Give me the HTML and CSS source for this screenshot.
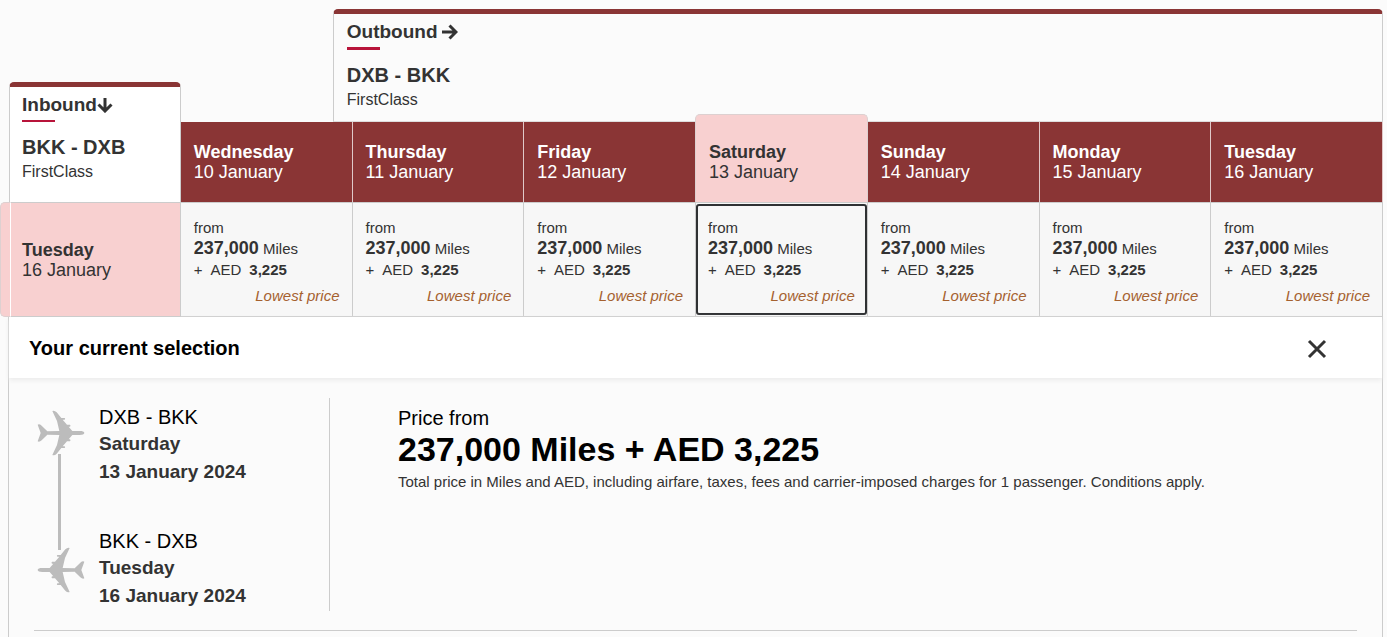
FILE: index.html
```html
<!DOCTYPE html>
<html lang="en">
<head>
<meta charset="utf-8">
<meta name="viewport" content="width=device-width, initial-scale=1">
<title>Flight fares</title>
<link rel="stylesheet" href="styles.css">
</head>
<body>
<svg class="defs" aria-hidden="true">
  <symbol id="plane" viewBox="0 0 150 144">
    <path d="M145 72c0 4-6 6-14 6H109L98 91h4q3 3 0 6H93L80 112h6q3 3 0 5H76L62 134q-7 7-13 4L63 108 70 78 34 77 17 94q-7 6-12 3L14 72 5 47q5-3 12 3L34 67 70 66 63 36 49 6q6-3 13 4L76 27H86q3 2 0 5H80L93 47h9q3 3 0 6H98L109 66h22c8 0 14 2 14 6z"/>
  </symbol>
</svg>
<main class="page">
  <table class="fares">
    <thead>
      <tr class="directions">
        <th class="corner" rowspan="2" scope="col">
          <div class="leg inbound">
            <div class="leg-title">Inbound<svg class="arrow" viewBox="0 0 16 16"><path d="M8 1v13M1.500 7.500L8 14l6.500-6.500"/></svg></div>
            <div class="leg-route">BKK - DXB</div>
            <div class="leg-class">FirstClass</div>
          </div>
        </th>
        <th class="top" colspan="7" scope="colgroup">
          <div class="leg outbound">
            <div class="leg-title">Outbound<svg class="arrow spaced" viewBox="0 0 16 16"><path d="M0 8h14M7.500 1.500L14 8l-6.500 6.500"/></svg></div>
            <div class="leg-route">DXB - BKK</div>
            <div class="leg-class">FirstClass</div>
          </div>
        </th>
      </tr>
      <tr class="days">
        <th scope="col"><div class="day"><b>Wednesday</b><span>10 January</span></div></th>
        <th scope="col"><div class="day"><b>Thursday</b><span>11 January</span></div></th>
        <th scope="col"><div class="day"><b>Friday</b><span>12 January</span></div></th>
        <th scope="col" class="chosen"><div class="day"><b>Saturday</b><span>13 January</span></div></th>
        <th scope="col"><div class="day"><b>Sunday</b><span>14 January</span></div></th>
        <th scope="col"><div class="day"><b>Monday</b><span>15 January</span></div></th>
        <th scope="col"><div class="day"><b>Tuesday</b><span>16 January</span></div></th>
      </tr>
    </thead>
    <tbody>
      <tr class="prices">
        <th scope="row"><div class="day"><b>Tuesday</b><span>16 January</span></div></th>
        <td><button class="fare" type="button"><span>from</span><span><b class="miles">237,000</b> Miles</span><span class="cash"><i>+</i><i>AED</i><b>3,225</b></span><em>Lowest price</em></button></td>
        <td><button class="fare" type="button"><span>from</span><span><b class="miles">237,000</b> Miles</span><span class="cash"><i>+</i><i>AED</i><b>3,225</b></span><em>Lowest price</em></button></td>
        <td><button class="fare" type="button"><span>from</span><span><b class="miles">237,000</b> Miles</span><span class="cash"><i>+</i><i>AED</i><b>3,225</b></span><em>Lowest price</em></button></td>
        <td><button class="fare selected" type="button" aria-pressed="true"><span>from</span><span><b class="miles">237,000</b> Miles</span><span class="cash"><i>+</i><i>AED</i><b>3,225</b></span><em>Lowest price</em></button></td>
        <td><button class="fare" type="button"><span>from</span><span><b class="miles">237,000</b> Miles</span><span class="cash"><i>+</i><i>AED</i><b>3,225</b></span><em>Lowest price</em></button></td>
        <td><button class="fare" type="button"><span>from</span><span><b class="miles">237,000</b> Miles</span><span class="cash"><i>+</i><i>AED</i><b>3,225</b></span><em>Lowest price</em></button></td>
        <td><button class="fare" type="button"><span>from</span><span><b class="miles">237,000</b> Miles</span><span class="cash"><i>+</i><i>AED</i><b>3,225</b></span><em>Lowest price</em></button></td>
      </tr>
    </tbody>
  </table>

  <section class="selection">
    <header class="selection-head">
      <h2>Your current selection</h2>
      <button class="close" type="button" aria-label="Close"><svg viewBox="0 0 24 24"><path d="M4 5l16 16M20 5L4 21"/></svg></button>
    </header>
    <div class="details">
      <div class="itinerary">
        <div class="track" aria-hidden="true">
          <svg class="plane"><use href="#plane"/></svg>
          <div class="line"></div>
          <svg class="plane back"><use href="#plane"/></svg>
        </div>
        <div class="stops">
          <div class="stop"><span>DXB - BKK</span><b>Saturday</b><b>13 January 2024</b></div>
          <div class="stop"><span>BKK - DXB</span><b>Tuesday</b><b>16 January 2024</b></div>
        </div>
      </div>
      <div class="total">
        <div class="total-label">Price from</div>
        <div class="total-price">237,000 Miles + AED 3,225</div>
        <p>Total price in Miles and AED, including airfare, taxes, fees and carrier-imposed charges for 1 passenger. Conditions apply.</p>
      </div>
    </div>
    <hr>
  </section>
</main>
</body>
</html>
```

FILE: styles.css
```css
* { box-sizing: border-box; }

body {
  margin: 0;
  background: #fbfbfb;
  color: #333;
  font: 15px/20px "Liberation Sans", Arial, sans-serif;
}

.defs { display: none; }

.page {
  display: flex;
  flex-direction: column;
  min-height: 100vh;
  padding: 9px 4px 0 8px;
}

/* Fare calendar */
.fares {
  width: calc(100% - 1px);
  margin-left: 1px;
  table-layout: fixed;
  border-spacing: 0;
}

.fares th,
.fares td {
  padding: 0;
  text-align: left;
  font-weight: normal;
}

.corner { vertical-align: bottom; }
.top { vertical-align: top; }

.leg {
  padding: 7px 12px 0;
  border: 1px solid #ccc;
  border-top: 5px solid #8a3535;
  border-bottom: 0;
  border-radius: 5px 5px 0 0;
}

.inbound {
  height: 120px;
  background: #fff;
}

.outbound {
  height: 113px;
  margin-left: 152px;
  padding-left: 13px;
  border-bottom: 1px solid #ddd;
}

.leg-title {
  display: flex;
  align-items: center;
  font-size: 19px;
  line-height: 22px;
  font-weight: bold;
}

.leg-route {
  margin-top: 4px;
  font-size: 20px;
  line-height: 24px;
  font-weight: bold;
}

.leg-route::before {
  content: "";
  display: block;
  width: 33px;
  height: 2px;
  margin-bottom: 13px;
  background: #b8143a;
}

.outbound .leg-route::before { height: 3px; }

.leg-class {
  margin-top: 3px;
  font-size: 16px;
}

.arrow {
  width: 16px;
  height: 16px;
  fill: none;
  stroke: #333;
  stroke-width: 3;
}

.arrow.spaced { margin-left: 4px; }

.day b,
.day span {
  display: block;
  font-size: 18px;
}

.days th {
  height: 80px;
  border-right: 1px solid #e0c8c8;
  background: #8a3535;
  color: #fff;
}

.day { padding-left: 13px; }

.days .chosen {
  position: relative;
  background: #f8d0d0;
  color: #333;
}

.chosen::before {
  content: "";
  position: absolute;
  inset: -8px -1px 0 -1px;
  border: 1px solid #ddd0d0;
  border-bottom: 0;
  border-radius: 5px 5px 0 0;
  background: #f8d0d0;
}

.chosen .day { position: relative; }

.prices th,
.prices td {
  height: 115px;
  border: solid #ccc;
  border-width: 1px 1px 1px 0;
  background: #f7f7f7;
}

.prices th {
  position: relative;
  background: #f8d0d0;
}

.prices th::before {
  content: "";
  position: absolute;
  top: -1px;
  bottom: -1px;
  left: -9px;
  width: 9px;
  border: 1px solid #ddd0d0;
  border-right-color: #fff;
  border-radius: 5px 0 0 5px;
  background: #f8d0d0;
}

.fare {
  display: flex;
  flex-direction: column;
  width: 100%;
  height: 113px;
  padding: 14px 12px 0 13px;
  border: 0;
  background: none;
  color: #333;
  font: inherit;
  line-height: 21px;
  text-align: left;
}

.fare.selected {
  height: 111px;
  padding: 11px 10px 0;
  border: 2px solid #2f3133;
  border-radius: 3px;
}

.miles { font-size: 18px; }

.cash {
  display: flex;
  gap: 8px;
}

.cash i { font-style: normal; }

.fare em {
  align-self: flex-end;
  margin-top: 5px;
  color: #a5612f;
}

/* Current selection */
.selection {
  flex: 1;
  border: solid #ccc;
  border-width: 0 1px;
}

.selection-head {
  display: flex;
  align-items: center;
  justify-content: space-between;
  height: 61px;
  padding: 0 53px 0 20px;
  background: #fff;
  box-shadow: 0 2px 5px #eaeaea;
}

h2 {
  margin: 0;
  color: #000;
  font-size: 20px;
  line-height: 24px;
}

.close {
  width: 24px;
  height: 24px;
  padding: 0;
  border: 0;
  background: none;
}

.close svg {
  display: block;
  fill: none;
  stroke: #333;
  stroke-width: 3;
}

.details {
  display: flex;
  margin: 20px 25px 19px;
}

.itinerary {
  display: flex;
  flex: none;
  width: 296px;
  height: 213px;
  border-right: 1px solid #ccc;
}

.track {
  display: flex;
  flex-direction: column;
  width: 65px;
  padding: 11px 0 17px 2px;
}

.plane {
  flex: none;
  width: 50px;
  height: 48px;
  fill: #bcbcbc;
}

.back { transform: scaleX(-1); }

.line {
  flex: 1;
  width: 3px;
  margin: -3px 0 -4px 22px;
  background: #bcbcbc;
}

.stops {
  display: flex;
  flex-direction: column;
  gap: 42px;
  padding-top: 6px;
}

.stop span,
.stop b {
  display: block;
  font-size: 19px;
  line-height: 28px;
}

.stop span {
  color: #000;
  font-size: 20px;
  line-height: 26px;
}

.total {
  padding: 8px 0 0 68px;
  color: #000;
}

.total-label {
  font-size: 20px;
  line-height: 24px;
}

.total-price {
  font-size: 34px;
  line-height: 38px;
  font-weight: bold;
}

.total p {
  margin: 4px 0 0;
  color: #333;
}

hr {
  height: 1px;
  margin: 0 25px;
  border: 0;
  background: #ccc;
}
```
